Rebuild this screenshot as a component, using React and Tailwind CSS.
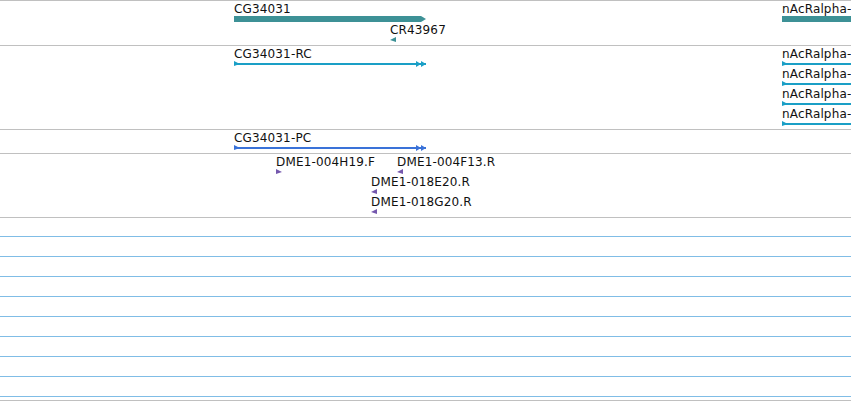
const font = { fontFamily: '"DejaVu Sans", Verdana, sans-serif' }

const TEAL = '#3d9196'
const CYAN = '#1a9fc6'
const BLUE = '#3a72d8'
const PURPLE = '#7457ad'

// a feature sits at its genomic x on the lane; label above, glyph below
function Feature({ x, label, children }) {
  return (
    <div className="absolute top-0 flex flex-col items-start" style={{ left: x }}>
      <span className="text-[12px] leading-[14px] tracking-[0.15px] text-[#111] whitespace-nowrap">
        {label}
      </span>
      {children}
    </div>
  )
}

function Bar({ w, point = true }) {
  return (
    <svg width={w} height={6} className="block">
      {point ? (
        <polygon points={`0,0 ${w - 5},0 ${w},3 ${w - 5},6 0,6`} fill={TEAL} />
      ) : (
        <rect width={w} height={6} fill={TEAL} />
      )}
    </svg>
  )
}

function Line({ w, color, end = true }) {
  return (
    <svg width={w} height={7} className="block">
      <rect x={0} y={2} width={w} height={2} fill={color} />
      <polygon points="0,0 6,3 0,5" fill={color} />
      {end && (
        <>
          <polygon points={`${w - 10},0 ${w - 5},3 ${w - 10},6`} fill={color} />
          <polygon points={`${w - 5},0 ${w},3 ${w - 5},6`} fill={color} />
        </>
      )}
    </svg>
  )
}

function Tick({ dir, color }) {
  return (
    <svg width={6} height={6} className="block">
      <polygon points={dir === 'right' ? '0,0 6,3 0,5' : '6,0 0,3 6,5'} fill={color} />
    </svg>
  )
}

function Lane({ className = 'h-[20px]', children }) {
  return <div className={`relative ${className}`}>{children}</div>
}

function Track({ className = '', children }) {
  return (
    <div className={`flex flex-col pt-px border-t border-[#c0c0c0] ${className}`}>{children}</div>
  )
}

export default function App() {
  return (
    <div className="w-[851px] h-[401px] bg-white overflow-hidden" style={font}>
      {/* genes */}
      <Track className="h-[45px]">
        <Lane className="h-[21px]">
          <Feature x={234} label="CG34031"><Bar w={192} /></Feature>
          <Feature x={782} label="nAcRalpha-"><Bar w={69} point={false} /></Feature>
        </Lane>
        <Lane>
          <Feature x={390} label="CR43967"><Tick dir="left" color={TEAL} /></Feature>
        </Lane>
      </Track>

      {/* transcripts */}
      <Track className="h-[84px]">
        {[0, 1, 2, 3].map(i => (
          <Lane key={i}>
            {i === 0 && (
              <Feature x={234} label="CG34031-RC"><Line w={192} color={CYAN} /></Feature>
            )}
            <Feature x={782} label="nAcRalpha-"><Line w={69} color={CYAN} end={false} /></Feature>
          </Lane>
        ))}
      </Track>

      {/* proteins */}
      <Track className="h-[24px]">
        <Lane>
          <Feature x={234} label="CG34031-PC"><Line w={192} color={BLUE} /></Feature>
        </Lane>
      </Track>

      {/* ESTs */}
      <Track className="h-[64px]">
        <Lane>
          <Feature x={276} label="DME1-004H19.F"><Tick dir="right" color={PURPLE} /></Feature>
          <Feature x={397} label="DME1-004F13.R"><Tick dir="left" color={PURPLE} /></Feature>
        </Lane>
        <Lane>
          <Feature x={371} label="DME1-018E20.R"><Tick dir="left" color={PURPLE} /></Feature>
        </Lane>
        <Lane>
          <Feature x={371} label="DME1-018G20.R"><Tick dir="left" color={PURPLE} /></Feature>
        </Lane>
      </Track>

      {/* empty rows */}
      <div className="flex flex-col h-[184px] border-y border-[#c0c0c0]">
        <div className="h-[19px] border-b border-[#80bde6]" />
        {Array.from({ length: 8 }).map((_, i) => (
          <div key={i} className="h-[20px] border-b border-[#80bde6]" />
        ))}
      </div>
    </div>
  )
}
